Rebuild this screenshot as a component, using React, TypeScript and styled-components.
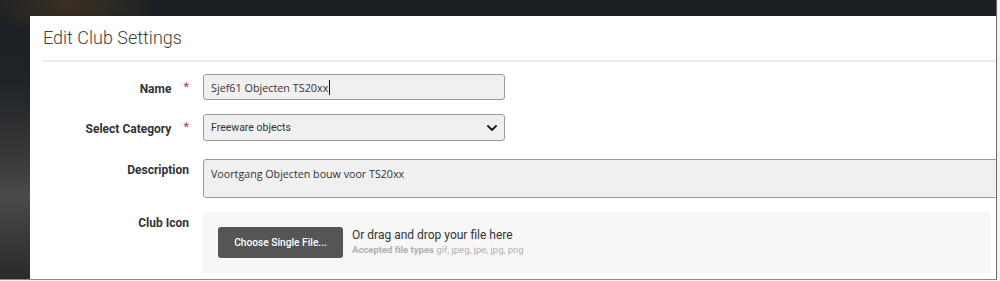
import React from "react"
import styled, { createGlobalStyle } from "styled-components"

const GlobalStyle = createGlobalStyle`
  html, body {
    margin: 0;
    padding: 0;
    background: #fff;
  }
  * {
    box-sizing: border-box;
  }
`

export function App() {
  return (
    <>
      <GlobalStyle />
      <StyledFrame>
        <StyledBackdrop>
          <StyledPanel>
            <StyledHeader>
              <h1>Edit Club Settings</h1>
            </StyledHeader>
            <StyledForm>
              <Row>
                <Label>
                  Name<Star>*</Star>
                </Label>
                <TextInput>
                  Sjef61 Objecten TS20xx<Caret />
                </TextInput>
              </Row>
              <Row>
                <Label>
                  Select Category<Star>*</Star>
                </Label>
                <SelectBox>
                  <span>Freeware objects</span>
                  <svg width="12" height="12" viewBox="0 0 12 12">
                    <path
                      d="M2 4l4 4 4-4"
                      fill="none"
                      stroke="#222"
                      strokeWidth="2"
                      strokeLinecap="round"
                      strokeLinejoin="round"
                    />
                  </svg>
                </SelectBox>
              </Row>
              <Row $top $space={18}>
                <Label $top>Description</Label>
                <TextArea>Voortgang Objecten bouw voor TS20xx</TextArea>
              </Row>
              <Row $top>
                <Label $top>Club Icon</Label>
                <DropZone>
                  <ChooseButton>Choose Single File...</ChooseButton>
                  <DropText>
                    <div className="main">Or drag and drop your file here</div>
                    <div className="types">
                      <b>Accepted file types</b> gif, jpeg, jpe, jpg, png
                    </div>
                  </DropText>
                </DropZone>
              </Row>
            </StyledForm>
          </StyledPanel>
        </StyledBackdrop>
      </StyledFrame>
    </>
  )
}

export default App

const StyledFrame = styled.div`
  width: 1000px;
  height: 281px;
  padding: 0 3px 1px 0;
  overflow: hidden;
  background: #f2f2f2;
`

const StyledBackdrop = styled.div`
  height: 100%;
  display: flex;
  padding: 16px 0 0 30px;
  border-right: 1px solid #6a6a6a;
  border-bottom: 1px solid #8a8a8a;
  background:
    radial-gradient(ellipse 90px 30px at 70px 4px, rgba(120, 80, 30, 0.35), transparent),
    linear-gradient(
      180deg,
      #1b1f23 0%,
      #202428 30%,
      #363737 55%,
      #4a4a49 70%,
      #2a2a29 100%
    );
  overflow: hidden;
`

const StyledPanel = styled.div`
  flex: 1;
  background: #fff;
  padding-left: 13px;
  overflow: hidden;
`

const StyledHeader = styled.header`
  height: 46px;
  border-bottom: 2px solid #ececec;
  display: flex;
  align-items: center;

  h1 {
    margin: 0;
    padding-bottom: 1px;
    font-family: Roboto, "Liberation Sans", sans-serif;
    font-weight: 300;
    font-size: 18px;
    color: #3f3f3f;
  }
`

const StyledForm = styled.div`
  display: flex;
  flex-direction: column;
  padding-top: 12px;
`

const Row = styled.div<{ $top?: boolean; $space?: number }>`
  display: grid;
  grid-template-columns: 160px 1fr;
  align-items: ${p => (p.$top ? "start" : "center")};
  margin-top: ${p => p.$space ?? 14}px;

  &:first-child {
    margin-top: 0;
  }
`

const Label = styled.label<{ $top?: boolean }>`
  text-align: right;
  padding-right: 14px;
  font-family: Roboto, "Liberation Sans", sans-serif;
  font-weight: 700;
  font-size: 12px;
  color: #333;
  padding-top: ${p => (p.$top ? "4px" : "0")};
`

const Star = styled.span`
  display: inline-block;
  margin-left: 12px;
  color: #c0394b;
  font-weight: 400;
  font-size: 13px;
  vertical-align: 2px;
`

const fieldBase = `
  background: #f0f0f0;
  border: 1px solid #9a9a9a;
  border-radius: 3px;
  color: #333;
`

const TextInput = styled.div`
  ${fieldBase}
  width: 302px;
  height: 26px;
  padding: 0 7px;
  display: flex;
  align-items: center;
  font-family: "Open Sans", "Liberation Sans", sans-serif;
  font-size: 10.8px;
`

const Caret = styled.span`
  display: inline-block;
  width: 1px;
  height: 15px;
  background: #111;
  margin-left: 1px;
`

const SelectBox = styled.div`
  ${fieldBase}
  width: 302px;
  height: 27px;
  padding: 0 6px 0 7px;
  display: flex;
  align-items: center;
  justify-content: space-between;
  font-family: Roboto, "Liberation Sans", sans-serif;
  font-size: 10.5px;
`

const TextArea = styled.div`
  ${fieldBase}
  height: 39px;
  margin-right: -10px;
  border-radius: 3px 0 0 3px;
  padding: 6px 7px;
  font-family: "Open Sans", "Liberation Sans", sans-serif;
  font-size: 10.7px;
  line-height: 16px;
`

const DropZone = styled.div`
  background: #f7f7f7;
  height: 61px;
  margin-right: 6px;
  padding: 15px 15px;
  display: flex;
  align-items: flex-start;
  gap: 9px;
`

const ChooseButton = styled.button`
  width: 125px;
  height: 31px;
  border: none;
  border-radius: 3px;
  background: #555;
  color: #fff;
  font-family: Roboto, "Liberation Sans", sans-serif;
  font-weight: 500;
  font-size: 10.2px;
  padding: 0;
`

const DropText = styled.div`
  font-family: Roboto, "Liberation Sans", sans-serif;
  padding-top: 1px;

  .main {
    font-size: 12px;
    color: #333;
    line-height: 15px;
  }

  .types {
    font-size: 9.5px;
    color: #b0b0b0;
    line-height: 13px;

    b {
      font-weight: 700;
    }
  }
`
